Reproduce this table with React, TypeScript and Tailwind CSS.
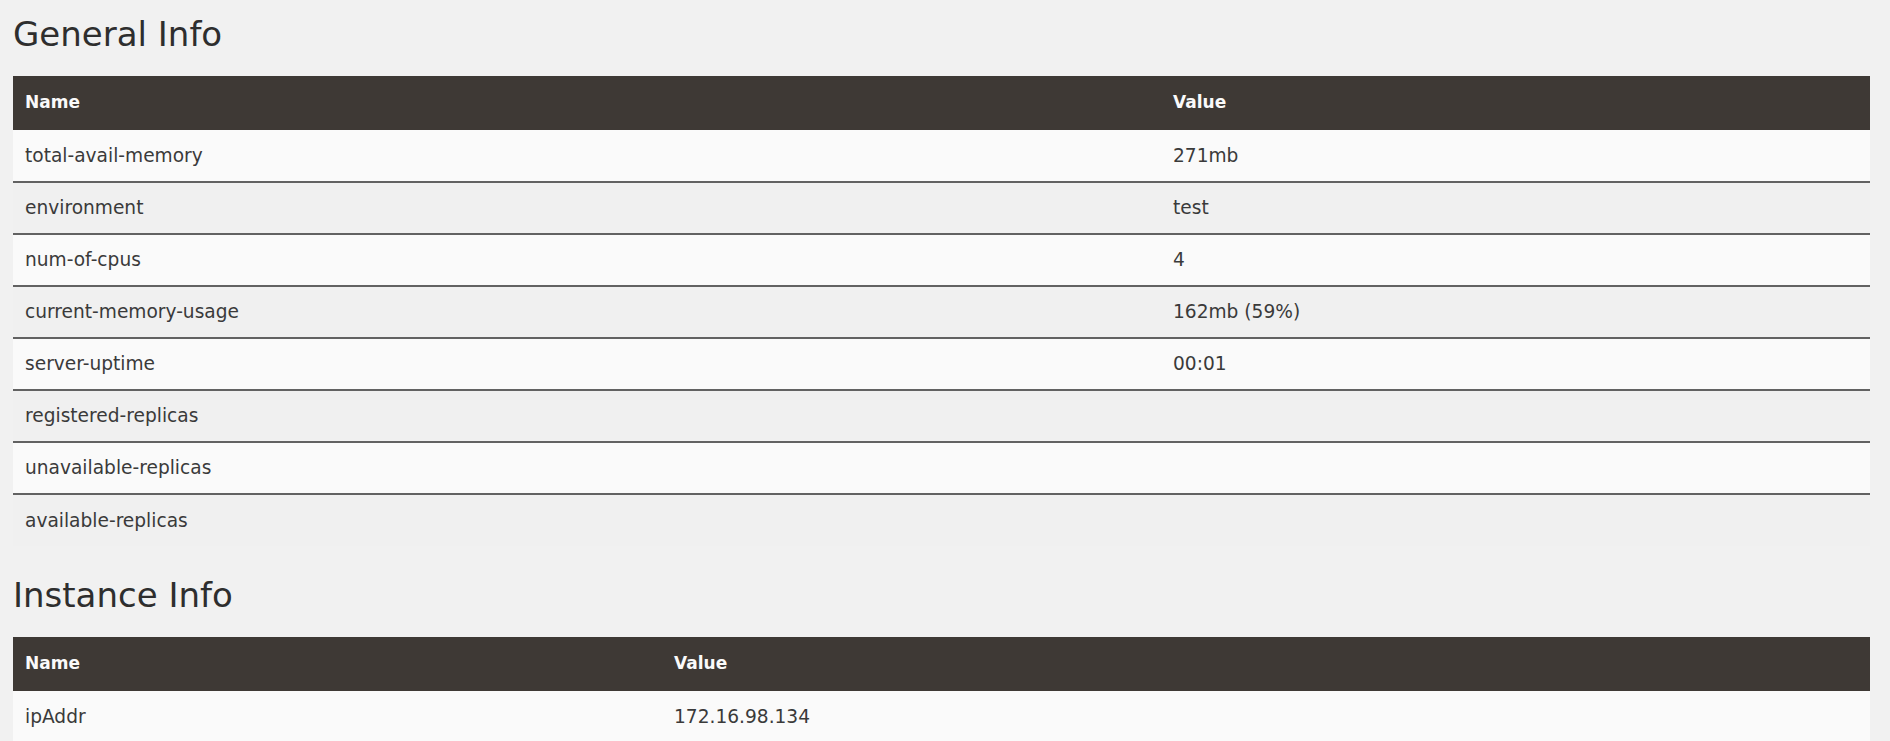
import React from 'react';

const generalInfo: [string, string][] = [
  ['total-avail-memory', '271mb'],
  ['environment', 'test'],
  ['num-of-cpus', '4'],
  ['current-memory-usage', '162mb (59%)'],
  ['server-uptime', '00:01'],
  ['registered-replicas', ''],
  ['unavailable-replicas', ''],
  ['available-replicas', ''],
];

const instanceInfo: [string, string][] = [['ipAddr', '172.16.98.134']];

const InfoTable = ({ rows, nameWidth }: { rows: [string, string][]; nameWidth: string }) => {
  return (
    <table className="w-full border-collapse text-left">
      <thead>
        <tr className="h-[54px] bg-[#3e3935] text-[#fafafa]">
          <th className={`${nameWidth} px-3 text-[17px] font-bold`}>Name</th>
          <th className="px-3 text-[17px] font-bold">Value</th>
        </tr>
      </thead>
      <tbody>
        {rows.map(([name, value], i) => (
          <tr
            key={name}
            className={`h-[52px] ${i % 2 === 0 ? 'bg-[#fafafa]' : 'bg-[#f0f0f0]'} ${
              i < rows.length - 1 ? 'border-b-2 border-[#626262]' : ''
            }`}
          >
            <td className="px-3 text-[18.6px] text-[#3a3a3a]">{name}</td>
            <td className="px-3 text-[18.6px] text-[#3a3a3a]">{value}</td>
          </tr>
        ))}
      </tbody>
    </table>
  );
};

export default function App() {
  return (
    <div
      className="min-h-screen bg-[#f1f1f1] pl-[13px] pr-[20px] pt-[14px]"
      style={{ fontFamily: '"DejaVu Sans", "Liberation Sans", sans-serif' }}
    >
      <h2 className="text-[34px] leading-[40px] text-[#2e2e2e]">General Info</h2>
      <div className="mt-[22px]">
        <InfoTable rows={generalInfo} nameWidth="w-[1148px]" />
      </div>
      <h2 className="mt-[29px] text-[34px] leading-[40px] text-[#2e2e2e]">Instance Info</h2>
      <div className="mt-[22px]">
        <InfoTable rows={instanceInfo} nameWidth="w-[649px]" />
      </div>
    </div>
  );
}
